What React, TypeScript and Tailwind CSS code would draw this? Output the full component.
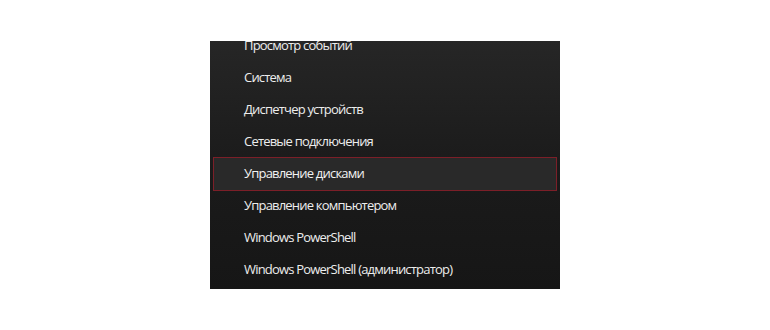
const items = [
  "Просмотр событий",
  "Система",
  "Диспетчер устройств",
  "Сетевые подключения",
  "Управление дисками",
  "Управление компьютером",
  "Windows PowerShell",
  "Windows PowerShell (администратор)",
];

const ACTIVE = 4;

export default function App() {
  return (
    <div className="flex h-[330px] w-full justify-center bg-white" style={{ fontFamily: '"Open Sans", "Noto Sans", sans-serif' }}>
      <div className="mt-[41px] h-[248px] w-[350px] overflow-hidden bg-gradient-to-b from-[#262626] via-[#1b1b1b] to-[#161616] px-[3px]">
        <ul className="-mt-[11px] flex flex-col">
          {items.map((label, i) => (
            <li
              key={label}
              className={
                i === ACTIVE
                  ? "-my-px flex h-[34px] items-center border border-[#7c1f28] bg-[#292929] pl-[30px] text-[13px] font-medium tracking-[-0.8px] text-[#f2f2f2]"
                  : "flex h-[32px] items-center pl-[31px] text-[13px] font-medium tracking-[-0.8px] text-[#ededed]"
              }
            >
              {label}
            </li>
          ))}
        </ul>
      </div>
    </div>
  );
}
